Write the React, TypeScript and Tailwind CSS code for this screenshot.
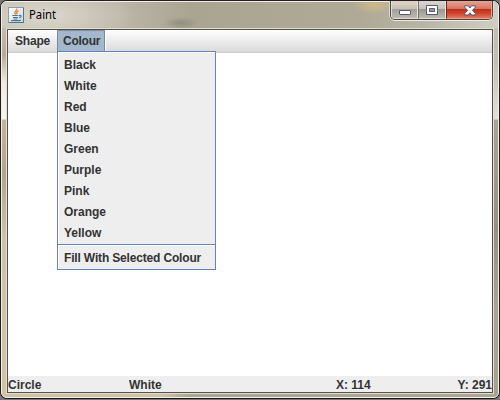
const colours = ['Black', 'White', 'Red', 'Blue', 'Green', 'Purple', 'Pink', 'Orange', 'Yellow'];

function JavaIcon() {
  return (
    <svg width="16" height="16" viewBox="0 0 16 16" className="shrink-0">
      <defs>
        <linearGradient id="tile" x1="0" y1="0" x2="1" y2="1">
          <stop offset="0" stopColor="#ffffff" />
          <stop offset="1" stopColor="#cbd5dd" />
        </linearGradient>
      </defs>
      <rect x="0.5" y="0.5" width="15" height="15" fill="url(#tile)" stroke="#8a9dac" />
      <path d="M15.5 1v14.5H1" fill="none" stroke="#4f7593" />
      <path d="M8.7 1.5c1 2-3 2.8-1.8 4.7l1 1.3M10.6 3.7c-2.2 1-2.4 1.8-1.3 3.5" fill="none" stroke="#ec7d22" strokeWidth="1.3" />
      <path d="M4.3 8.5h6M5 10.5h5M5.5 12h4M3 13.6h8.5l1.3-.7M11 8.5c3-.6 2.6 1.5.3 2.3" fill="none" stroke="#4d789c" strokeWidth="1.1" />
    </svg>
  );
}

function Controls() {
  return (
    <div className="absolute left-[390px] top-px flex h-[19px] w-[103px] overflow-hidden rounded-b-[5px] border border-t-0 border-[#49443f] shadow-[0_1px_0_#efeee9,1px_0_0_#dedbd3,-1px_0_0_#dedbd3]">
      <div className="w-[27px] border border-t-0 border-[#e5e2dc] bg-[linear-gradient(#e0d5c7_0%,#c8c1b6_45%,#a4a099_50%,#bcb9b0_100%)] pl-[7px] pt-[9px]">
        <svg width="12" height="5" className="block"><rect x="0.5" y="0.5" width="11" height="4" rx="0.5" fill="#fff" stroke="#555a70" /></svg>
      </div>
      <div className="w-[28px] border border-t-0 border-l-[#77736e] border-[#e5e2dc] bg-[linear-gradient(#dad6cf_0%,#c5c2bc_45%,#9b9994_50%,#bab8af_100%)] pl-[7px] pt-[4px]">
        <svg width="12" height="10" className="block"><path d="M.5.5h11v9H.5zM3.5 3.5v3h5v-3z" fill="#fff" fillRule="evenodd" stroke="#555a70" /></svg>
      </div>
      <div className="w-[46px] border border-t-0 border-l-[#6b2b20] border-[#ee9e8c] bg-[linear-gradient(#e5a394_0%,#d77661_45%,#bd301a_50%,#cf4932_75%,#e5775c_100%)] pl-[17px] pt-[4px]">
        <svg width="12" height="11" viewBox="0 0 12 11" className="block"><path d="M.7.8h3.6L6 3l1.7-2.2h3.6v1.4L8.4 5.4l2.9 3.1V10H7.7L6 7.8 4.3 10H.7V8.5l2.9-3.1L.7 2.2z" fill="#fff" stroke="#545669" /></svg>
      </div>
    </div>
  );
}

function ColourMenu() {
  return (
    <div className="absolute left-[57px] top-[51px] h-[219px] w-[159px] border border-[#6382bf] bg-[#eee] pt-[2px] shadow-[inset_1px_1px_0_#fff]">
      {colours.map((name) => (
        <div key={name} className="h-[21px] pl-[6px] leading-[23px]">{name}</div>
      ))}
      <div className="mt-px h-[3px] border-t border-[#6382bf] shadow-[inset_0_1px_0_#fff]" />
      <div className="h-[21px] whitespace-nowrap pl-[6px] leading-[23px] tracking-[-0.165px]">Fill With Selected Colour</div>
    </div>
  );
}

export default function App() {
  return (
    <div className="h-[400px] w-[500px] overflow-hidden bg-[#77777b] text-[12px] font-bold text-[#333] [font-family:'Liberation_Sans',Arial,sans-serif]">
      <div className="relative h-[399px] w-[500px] rounded-[7px] border border-b-[#171717] border-[#211d20] bg-[#b0ab98]">
        <div className="flex h-[397px] w-[498px] flex-col overflow-hidden rounded-[6px] border border-[#f3f0e9] bg-[linear-gradient(90deg,#cfc3a6_0%,#cfc3a6_32%,#aaa68f_38%,#aca794_100%)]">
          <div className="flex h-[26px] shrink-0 items-center bg-[radial-gradient(ellipse_18px_6px_at_179px_21px,#908e7f_0%,#908e7f00_100%),radial-gradient(ellipse_22px_9px_at_372px_3px,#cfba87_0%,#cfba8700_100%),radial-gradient(ellipse_90px_30px_at_45px_14px,#dcd7cd_0%,#dcd7cd00_100%),linear-gradient(90deg,#c4beb0_0%,#bbb5a7_24%,#aaa591_38%,#afa995_72%,#b9b5a6_85%,#d0cec3_100%)] pl-[6px]">
            <JavaIcon />
            <span className="ml-[5px] text-[12px] font-normal text-black [font-family:'Noto_Sans',sans-serif]"><span className="inline-block origin-left scale-x-[.94]">Paint</span></span>
          </div>
          <div className="flex min-h-0 flex-1">
            <div className="w-[4px] shrink-0 bg-[linear-gradient(#c6bcae_0px,#b7ab97_27px,#f1ebe2_55px,#faf5ef_91px,#c5b598_92px,#b4a68d_145px,#cfc2a8_210px,#d0c4a8_100%)]" />
            <div className="flex h-[366px] w-[488px] shrink-0 flex-col border border-[#e1ddd2]">
              <div className="flex min-h-0 flex-1 flex-col border border-[#575249] bg-white">
                <div className="flex h-[23px] shrink-0 border-b border-[#ccc] bg-[linear-gradient(#fff,#dadada)]">
                  <div className="w-[49px] pl-[7px] leading-[22px] tracking-[-0.2px]">Shape</div>
                  <div className="h-[21px] w-[48px] border border-b-0 border-[#7a8a99] bg-[#a3b8cc] pl-[5px] leading-[20px] tracking-[-0.25px] shadow-[1px_0_0_#fff]">Colour</div>
                </div>
                <div className="flex-1 bg-white" />
                <div className="flex h-[16px] shrink-0 justify-between bg-[#eee] leading-[19px]">
                  <span className="w-[121px]">Circle</span>
                  <span className="w-[207px]">White</span>
                  <span>X: 114</span>
                  <span className="flex-1 text-right">Y: 291</span>
                </div>
              </div>
            </div>
            <div className="w-[4px] shrink-0 bg-[linear-gradient(#c3c0b3_0px,#c3c0b3_35px,#e2e1da_91px,#aaa591_92px,#96917d_200px,#aaa591_280px,#a6a28e_100%)]" />
          </div>
        </div>
      </div>
      <Controls />
      <ColourMenu />
    </div>
  );
}
